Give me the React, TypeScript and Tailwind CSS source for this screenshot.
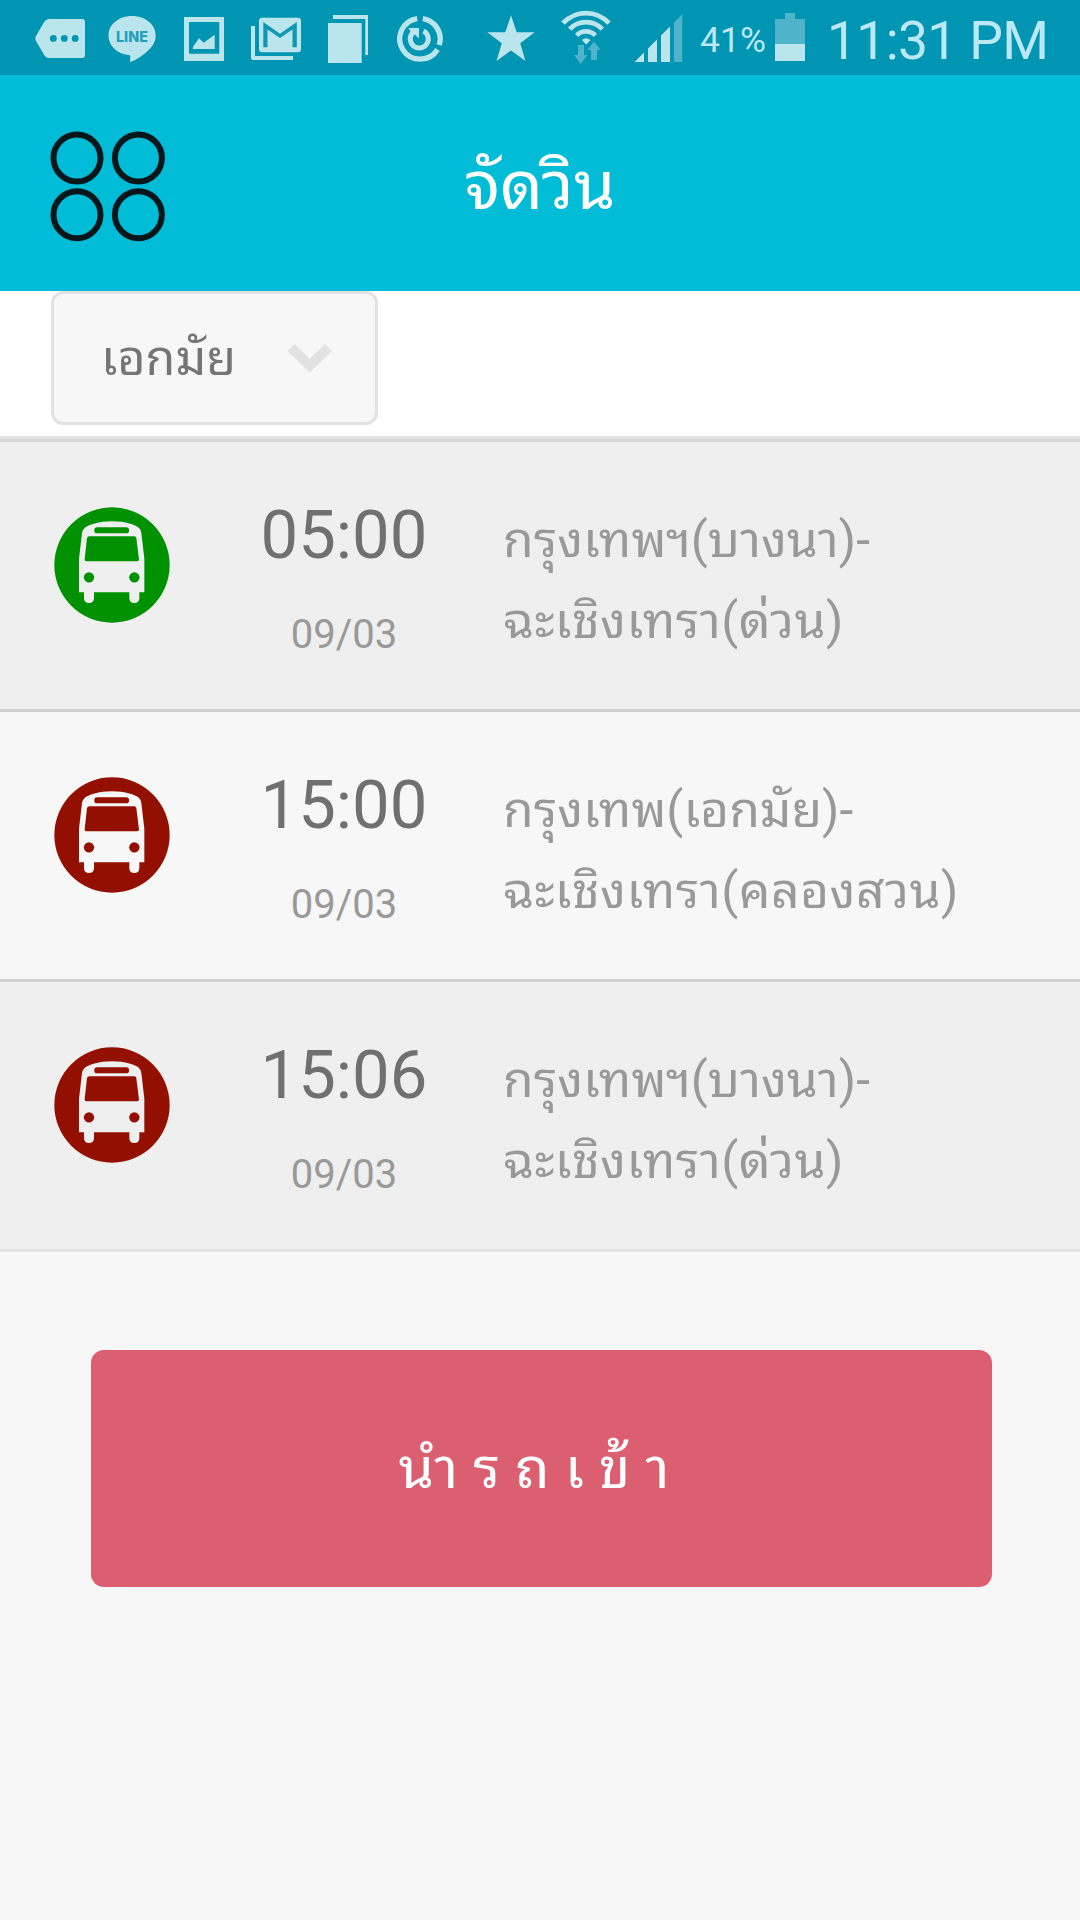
import type { ReactNode } from 'react';

const LIGHT = '#bbe5ec';
const DIM = '#4fb3c9';

interface Trip {
  id: number;
  time: string;
  date: string;
  from: string;
  to: string;
  status: 'ready' | 'waiting';
}

const TRIPS: Trip[] = [
  { id: 1, time: '05:00', date: '09/03', from: 'กรุงเทพฯ(บางนา)-', to: 'ฉะเชิงเทรา(ด่วน)', status: 'ready' },
  { id: 2, time: '15:00', date: '09/03', from: 'กรุงเทพ(เอกมัย)-', to: 'ฉะเชิงเทรา(คลองสวน)', status: 'waiting' },
  { id: 3, time: '15:06', date: '09/03', from: 'กรุงเทพฯ(บางนา)-', to: 'ฉะเชิงเทรา(ด่วน)', status: 'waiting' },
];

function StatusIcon({ x, width, className, children }: { x: number; width: number; className?: string; children: ReactNode }) {
  return (
    <svg width={width} height={75} viewBox={`${x} 0 ${width} 75`} fill={LIGHT} className={`shrink-0 ${className ?? ''}`}>
      {children}
    </svg>
  );
}

function StatusBar() {
  return (
    <div className="h-[75px] bg-[#0095b3] flex items-center pl-[35px] text-[#bbe8f3]">
      <StatusIcon x={35} width={50}>
        <path d="M49 19H82Q85 19 85 22V55Q85 58 82 58H49Q46 58 44.5 55.500L36 41Q34.500 38.500 36 36L44.500 21.500Q46 19 49 19Z" />
        <g fill="#0095b3">
          <circle cx="53.3" cy="38.4" r="3.4" />
          <circle cx="64.3" cy="38.4" r="3.4" />
          <circle cx="75.2" cy="38.4" r="3.4" />
        </g>
      </StatusIcon>
      <StatusIcon x={108} width={48} className="ml-[23px]">
        <path d="M132 16C145.500 16 155.700 24.500 155.700 35.500C155.700 42 152 47.500 146.500 52C141.500 56.500 135 60.500 130.500 62C129.500 61 131 57 129.800 55.300C117 54 108.500 46 108.500 35.500C108.500 24.500 118.500 16 132 16Z" />
        <text x="116" y="41.700" fontSize="14.500" fontFamily="Inter, sans-serif" fontWeight="800" textLength="32" lengthAdjust="spacingAndGlyphs" fill="#239fb9">LINE</text>
      </StatusIcon>
      <StatusIcon x={184} width={40} className="ml-[28px]">
        <path fillRule="evenodd" d="M184 17H224V61H184ZM189 22V53.700H219.300V22Z" />
        <path d="M193 49V46.700L199 38.300L203.700 42.700L214.700 34.700V49Z" />
      </StatusIcon>
      <StatusIcon x={251} width={50} className="ml-[27px]">
        <path d="M251 26H255V56H293V60H253Q251 60 251 58Z" />
        <rect x="259" y="17.700" width="42" height="34.500" rx="3" />
        <path d="M263.300 47.300V22L280 33.700L296.800 22V47.300H292.500V29.500L280 38L267.500 29.500V47.300Z" fill="#0f98b4" />
      </StatusIcon>
      <StatusIcon x={328} width={40} className="ml-[27px]">
        <path d="M333 15H368V55H365.300V19H333Z" />
        <rect x="328" y="23" width="33.700" height="40" />
      </StatusIcon>
      <StatusIcon x={397} width={46} className="ml-[29px]">
        <g fill="none" stroke={LIGHT} strokeWidth="5.300">
          <path d="M417.300 18.600A20.400 20.400 0 1 0 437.500 49.500" />
          <path d="M422.800 18.600A20.400 20.400 0 0 1 439.200 45" />
          <path d="M423.500 31A9 9 0 1 1 412.500 33" strokeWidth="5" />
        </g>
        <path d="M408.500 28H419V38.500L415.500 35L411.500 33.500Z" />
      </StatusIcon>
      <StatusIcon x={487} width={48} className="ml-[44px]">
        <path d="M511 15.300L516.700 32.300H534.700L520.200 43.200L525.500 61L511 50.500L496.500 61L501.800 43.200L487.400 32.300H505.300Z" />
      </StatusIcon>
      <StatusIcon x={561} width={50} className="ml-[26px]">
        <g fill="none" stroke={LIGHT} strokeWidth="4.800">
          <path d="M563 23.200A31.200 31.200 0 0 1 609 23.200" />
          <path d="M569.700 29.200A22.300 22.300 0 0 1 602.300 29.200" />
          <path d="M576.600 35.400A13 13 0 0 1 595.400 35.400" />
        </g>
        <path d="M581.800 40Q586 36.300 590.600 40L586.200 44.500Z" />
        <path d="M578 45H584V55H587.500L580.700 64L574 55H578Z" fill={DIM} />
        <path d="M594 41.500L600.500 50H597V60H591V50H587.500Z" fill={DIM} />
      </StatusIcon>
      <StatusIcon x={634} width={49} className="ml-[23px]">
        <path d="M634.500 62L644 52.500V62ZM648 48.500L657 39.500V62H648ZM661 35.500L670 26.500V62H661Z" />
        <path d="M674 22.500L682.300 14V62H674Z" fill={DIM} />
      </StatusIcon>
      <span className="ml-[17px] w-[66px] pt-[6px] text-[35.5px] leading-none whitespace-nowrap">41%</span>
      <StatusIcon x={775} width={30} className="ml-[9px]">
        <path d="M785 13H795V19H805V44H775V19H785Z" fill={DIM} />
        <rect x="775" y="44" width="30" height="17" />
      </StatusIcon>
      <span className="ml-[22px] pt-[7px] text-[53.5px] leading-none tracking-[-0.7px] whitespace-nowrap">11:31 PM</span>
    </div>
  );
}

function Header() {
  return (
    <header className="h-[216px] bg-[#00bcd7] grid grid-cols-[1fr_auto_1fr] items-center">
      <button className="pl-[50px]" aria-label="menu">
        <svg width="116" height="118" viewBox="50 124 116 118" fill="none" stroke="#04171b" strokeWidth="6" className="block">
          <circle cx="77" cy="157.900" r="23.500" />
          <circle cx="138.400" cy="157.900" r="23.500" />
          <circle cx="77" cy="214.800" r="23.500" />
          <circle cx="138.400" cy="214.800" r="23.500" />
        </svg>
      </button>
      <h1 className="pt-[6px] text-[67px] leading-[80px] text-white">จัดวิน</h1>
      <span />
    </header>
  );
}

function BusIcon({ color }: { color: string }) {
  return (
    <svg width="116" height="116" viewBox="72 80 348 348" className="block">
      <path
        fill={color}
        fillRule="evenodd"
        d="M246 81A173 173 0 1 0 246 427A173 173 0 1 0 246 81ZM246 123C285 123 318 133 329 145Q333 149 334 158L343 235V336H328V354Q328 368 312.500 368Q298 368 298 354V336H192V354Q192 368 177 368Q162 368 162 354V336H147V235L156 158Q157 149 162 145C174 133 207 123 246 123Z"
      />
      <g fill={color}>
        <rect x="193" y="141" width="104" height="18" rx="8" />
        <path d="M178 168H313Q318 168 319 173L327 237Q327 243 322 243H169Q164 243 164 237L171 173Q172 168 178 168Z" />
        <circle cx="177" cy="291" r="15.500" />
        <circle cx="313" cy="291" r="15.500" />
      </g>
    </svg>
  );
}

function TripRow({ trip, shaded, last }: { trip: Trip; shaded: boolean; last: boolean }) {
  return (
    <li
      className={`h-[270px] flex border-b-[3px] ${shaded ? 'bg-[#efefef]' : 'bg-[#f7f7f7]'} ${last ? 'border-[#e2e2e2]' : 'border-[#d0d0d0]'}`}
    >
      <div className="pl-[54px] pt-[65px]">
        <BusIcon color={trip.status === 'ready' ? '#009100' : '#931000'} />
      </div>
      <div className="ml-[74px] w-[200px] flex flex-col items-center">
        <span className="mt-[53px] text-[67px] leading-[80px] text-[#707070]">{trip.time}</span>
        <span className="mt-[35px] text-[40px] leading-[50px] text-[#999999]">{trip.date}</span>
      </div>
      <div className="ml-[59px] pt-[58px] text-[49.8px] leading-[81px] text-[#999999] whitespace-nowrap">
        <p>{trip.from}</p>
        <p className="tracking-[0.5px]">{trip.to}</p>
      </div>
    </li>
  );
}

export default function App() {
  return (
    <div className="w-[1080px] h-[1920px] overflow-hidden bg-[#f7f7f7] font-[Roboto,'Noto_Sans_Thai_Looped','Noto_Sans_Thai','Noto_Sans',sans-serif]">
      <StatusBar />
      <Header />

      <div className="h-[148px] bg-white border-b-[3px] border-[#e4e4e4] pl-[51px]">
        <button className="w-[327px] h-[134px] flex items-center justify-between rounded-xl border-[3px] border-[#e2e2e2] bg-[#f7f7f7] pl-[47px] pr-[42px]">
          <span className="pt-[2px] text-[48.5px] leading-[60px] text-[#757575]">เอกมัย</span>
          <svg width="46" height="30" viewBox="0 0 46 30" fill="none" stroke="#e2e2e2" strokeWidth="10">
            <path d="M4 4.500L22.700 22.500L41.500 4.500" />
          </svg>
        </button>
      </div>

      <ul className="border-t-[3px] border-[#d6d6d6]">
        {TRIPS.map((trip, i) => (
          <TripRow key={trip.id} trip={trip} shaded={i % 2 === 0} last={i === TRIPS.length - 1} />
        ))}
      </ul>

      <div className="pt-[98px] pl-[91px]">
        <button className="w-[901px] h-[237px] rounded-[13px] bg-[#db5f71] text-[57px] leading-[80px] tracking-[15px] text-white">
          นำรถเข้า
        </button>
      </div>
    </div>
  );
}
